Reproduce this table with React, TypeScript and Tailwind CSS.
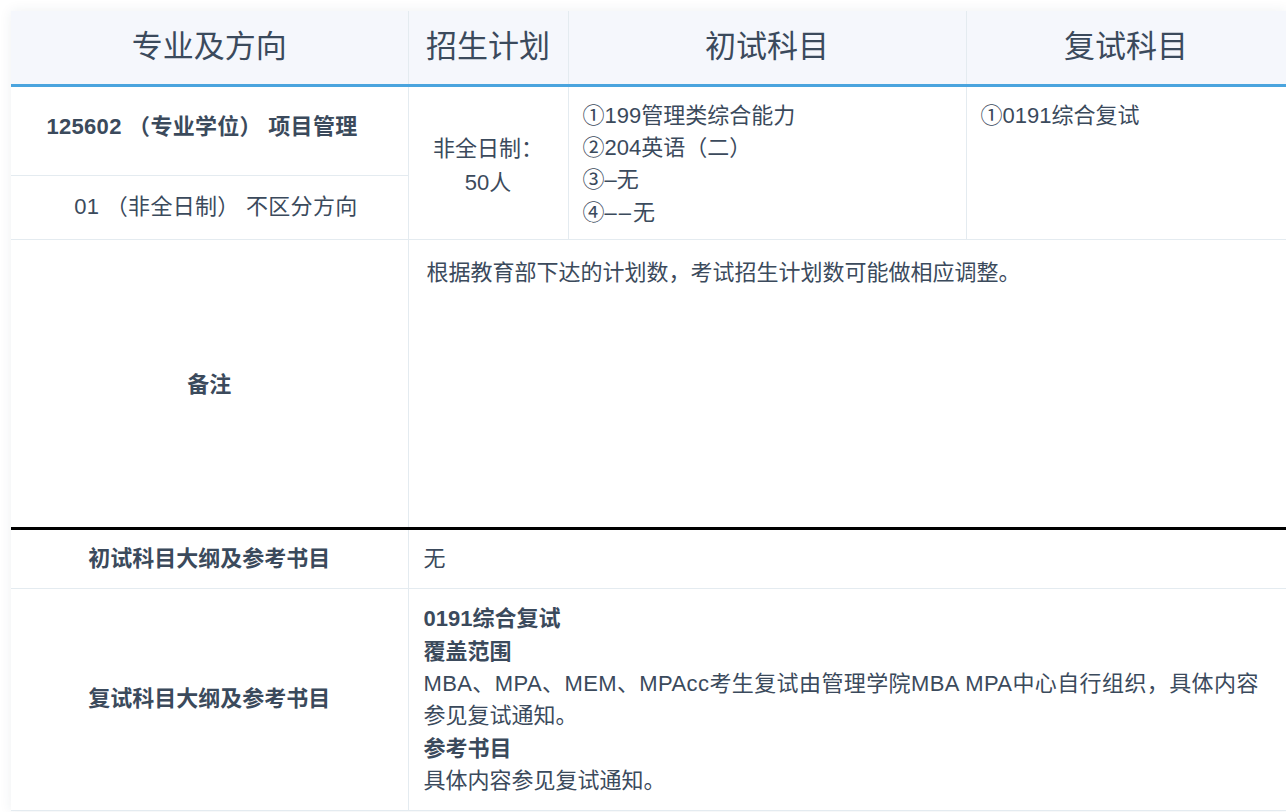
const font = "[font-family:'Liberation_Sans','Noto_Sans_CJK_SC',sans-serif]";

const headers = [
  { label: "专业及方向", width: "w-[397px]" },
  { label: "招生计划", width: "w-[160px]" },
  { label: "初试科目", width: "w-[398px]" },
  { label: "复试科目", width: "w-[320px]" },
];

const firstExams = ["①199管理类综合能力", "②204英语（二）", "③–无"];

export default function App() {
  return (
    <div className={`min-h-[812px] bg-white pl-[11px] pt-[11px] text-[#3b4a5c] ${font}`}>
      <div className="w-[1275px] shadow-[0_0_12px_rgba(40,60,90,0.08)]">
        <table className="w-full table-fixed border-collapse border-r border-[#e4ebf0] text-[22px] leading-[32.4px]">
          <thead>
            <tr className="h-[74px] border-b-[3px] border-[#4aa4de] bg-[#f5f7fc]">
              {headers.map((h, i) => (
                <th
                  key={h.label}
                  className={`${h.width} text-center text-[31px] font-normal ${
                    i < headers.length - 1 ? "border-r border-[#e4ebf0]" : ""
                  }`}
                >
                  {h.label}
                </th>
              ))}
            </tr>
          </thead>
          <tbody>
            <tr className="h-[90px]">
              <td className="border-b border-r border-[#e4ebf0] pb-[6px] pr-[50px] text-right font-bold tracking-[0.3px]">
                125602 （专业学位） 项目管理
              </td>
              <td rowSpan={2} className="border-r border-b border-[#e4ebf0] pt-[6px] text-center leading-[34px]">
                非全日制：
                <br />
                50人
              </td>
              <td rowSpan={2} className="border-r border-b border-[#e4ebf0] px-[14px] pb-[10px] pt-[13px] align-top">
                {firstExams.map((line) => (
                  <div key={line}>{line}</div>
                ))}
                <div>
                  ④<span className="tracking-[2px]">––</span>无
                </div>
              </td>
              <td rowSpan={2} className="border-b border-[#e4ebf0] px-[14px] pt-[13px] align-top">
                ①0191综合复试
              </td>
            </tr>
            <tr className="h-[64px]">
              <td className="border-b border-r border-[#e4ebf0] pr-[50px] text-right tracking-[0.3px]">
                01 （非全日制） 不区分方向
              </td>
            </tr>
            <tr className="h-[289px]">
              <td className="border-r border-[#e4ebf0] pt-[4px] text-center font-bold">备注</td>
              <td colSpan={3} className="px-[18px] pt-[17px] align-top">
                根据教育部下达的计划数，考试招生计划数可能做相应调整。
              </td>
            </tr>
            <tr className="h-[60px] border-t-[3px] border-black">
              <td className="border-b border-r border-[#e4ebf0] text-center font-bold">初试科目大纲及参考书目</td>
              <td colSpan={3} className="border-b border-[#e4ebf0] px-[15px]">
                无
              </td>
            </tr>
            <tr>
              <td className="border-b border-r border-[#e4ebf0] text-center font-bold">复试科目大纲及参考书目</td>
              <td colSpan={3} className="border-b border-[#e4ebf0] px-[15px] pb-[12px] pt-[14px]">
                <div className="font-bold">0191综合复试</div>
                <div className="font-bold">覆盖范围</div>
                <div className="whitespace-nowrap tracking-[0.4px]">
                  MBA、MPA、MEM、MPAcc考生复试由管理学院MBA MPA中心自行组织，具体内容
                </div>
                <div>参见复试通知。</div>
                <div className="font-bold">参考书目</div>
                <div>具体内容参见复试通知。</div>
              </td>
            </tr>
          </tbody>
        </table>
      </div>
    </div>
  );
}
